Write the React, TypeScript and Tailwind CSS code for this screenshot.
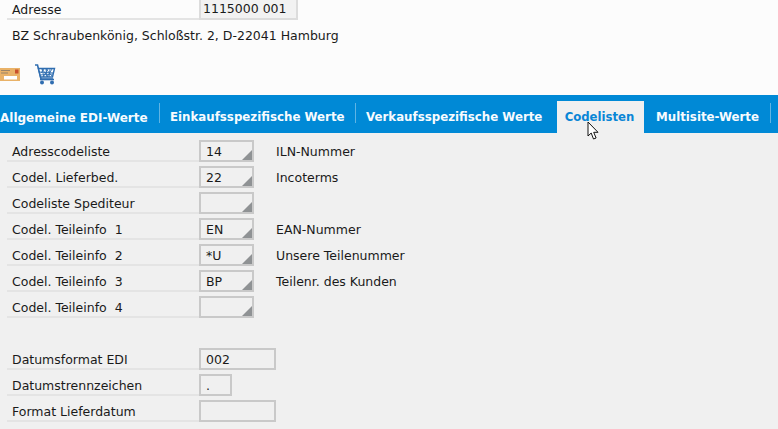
const font = "font-['DejaVu_Sans',sans-serif]";

type Row = { label: string; value?: string; note?: string; width: string; f4?: boolean };

const codeRows: Row[] = [
  { label: 'Adresscodeliste', value: '14', note: 'ILN-Nummer', width: 'w-[55px]', f4: true },
  { label: 'Codel. Lieferbed.', value: '22', note: 'Incoterms', width: 'w-[55px]', f4: true },
  { label: 'Codeliste Spediteur', width: 'w-[55px]', f4: true },
  { label: 'Codel. Teileinfo\u00a0\u00a01', value: 'EN', note: 'EAN-Nummer', width: 'w-[55px]', f4: true },
  { label: 'Codel. Teileinfo\u00a0\u00a02', value: '*U', note: 'Unsere Teilenummer', width: 'w-[55px]', f4: true },
  { label: 'Codel. Teileinfo\u00a0\u00a03', value: 'BP', note: 'Teilenr. des Kunden', width: 'w-[55px]', f4: true },
  { label: 'Codel. Teileinfo\u00a0\u00a04', width: 'w-[55px]', f4: true },
];

const dateRows: Row[] = [
  { label: 'Datumsformat EDI', value: '002', width: 'w-[77px]' },
  { label: 'Datumstrennzeichen', value: '.', width: 'w-[33px]' },
  { label: 'Format Lieferdatum', width: 'w-[77px]' },
];

const tabs = [
  { label: 'Allgemeine EDI-Werte', width: 'w-[160px]', pad: 'pl-0 text-[12px]', border: 'border-r border-[#5fb4e4]' },
  { label: 'Einkaufsspezifische Werte', width: 'w-[196px]', pad: 'pl-[10px]', border: 'border-r border-[#5fb4e4]' },
  { label: 'Verkaufsspezifische Werte', width: 'w-[201px]', pad: 'pl-[10px]', border: '' },
];

function FormRow({ label, value, note, width, f4 }: Row) {
  return (
    <div className="flex h-[26px] items-start">
      <div className="ml-[7px] flex h-[22px] w-[192px] items-center border-b-2 border-[#e4e4e4] pt-[5px] pl-[5px]">{label}</div>
      <div className={`relative flex h-[22px] ${width} items-center border-2 border-[#c9c9c9] pt-[3px] pl-[5px]`}>
        {value}
        {f4 && <span className="absolute right-0 bottom-0 h-0 w-0 border-b-[10px] border-l-[10px] border-b-[#8f9294] border-l-transparent" />}
      </div>
      {note && <div className="ml-[22px] flex h-[22px] items-center pt-[2px]">{note}</div>}
    </div>
  );
}

function Envelope() {
  return (
    <svg width="20" height="13" viewBox="0 0 20 13">
      <rect width="20" height="13" fill="#e9b268" />
      <rect x="15" y="1.5" width="3.5" height="4" fill="#c9502c" />
      <rect x="1" y="2" width="9" height="1" fill="#9a8468" />
      <rect x="1" y="4.5" width="7" height="1" fill="#9a8468" />
      <rect x="4" y="8" width="13" height="3.5" fill="#ffffff" />
    </svg>
  );
}

function Cart() {
  return (
    <svg width="22" height="21" viewBox="0 0 22 21" fill="none">
      <path d="M1 1h2.5l3.5 14h12" stroke="#2f6db0" strokeWidth="1.6" />
      <path d="M4.5 4.5h16l-2 8.5H6.5z" fill="#ffffff" stroke="#2f6db0" strokeWidth="1.4" />
      <path d="M8 5l2 8M12 5l1 8M16 5l-1 8M5 8l15 1M6 11l13-1M10 5l-3 4M14 5l-5 8M18 5l-5 8M8 5l6 8M12 5l6 7" stroke="#2f6db0" strokeWidth="0.9" />
      <path d="M6 15.5h14" stroke="#2f6db0" strokeWidth="1.6" />
      <circle cx="8" cy="18.5" r="2" fill="#2f6db0" />
      <circle cx="18" cy="18.5" r="2" fill="#2f6db0" />
    </svg>
  );
}

function Cursor() {
  return (
    <svg className="absolute top-[20px] left-[30px]" width="14" height="20" viewBox="0 0 14 20">
      <path d="M1 1v14l3.2-3 2.3 6 2.6-1-2.4-5.7H11z" fill="#ffffff" stroke="#111111" strokeWidth="1" />
    </svg>
  );
}

export default function App() {
  return (
    <div className={`flex h-[429px] w-[778px] flex-col overflow-hidden bg-[#f0f0f0] text-[12.5px] text-[#1a1a1a] ${font}`}>
      {/* Header */}
      <header className="h-[95px] shrink-0 bg-[#fcfcfc]">
        <div className="flex h-[20px] items-start">
          <div className="ml-[7px] flex h-[20px] w-[192px] items-center border-b-2 border-[#e4e4e4] pt-[2px] pl-[5px]">Adresse</div>
          <div className="flex h-[20px] w-[99px] items-center border-2 border-t-0 border-[#dcdcdc] bg-[#f2f2f2] pt-px pl-[2px]">1115000 001</div>
        </div>
        <div className="mt-[8px] pl-[12px] leading-[16px]">BZ Schraubenkönig, Schloßstr. 2, D-22041 Hamburg</div>
        <div className="mt-[20px] flex items-center gap-[14px]">
          <Envelope />
          <Cart />
        </div>
      </header>

      {/* Tab strip */}
      <nav className="flex h-[38px] shrink-0 items-end bg-[#0089d6] text-[11.8px] font-bold text-[#f7fbfe]">
        {tabs.map((tab) => (
          <div key={tab.label} className={`flex h-[32px] ${tab.width} items-start pt-[2px]`}>
            <div className={`flex h-[20px] w-full items-center pt-[9px] ${tab.border} ${tab.pad}`}>{tab.label}</div>
          </div>
        ))}
        <div className="relative flex h-[32px] w-[87px] items-center justify-center bg-[#f0f0f0] pt-px pr-[2px] text-[11.7px] text-[#0a86d6]">
          Codelisten
          <Cursor />
        </div>
        <div className="flex h-[32px] w-[127px] items-start pt-[2px]">
          <div className="flex h-[20px] w-full items-center border-r border-[#5fb4e4] pt-[9px] pl-[12px]">Multisite-Werte</div>
        </div>
      </nav>

      {/* Form */}
      <main className="pt-[7px]">
        {codeRows.map((row) => (
          <FormRow key={row.label} {...row} />
        ))}
        <div className="h-[26px]" />
        {dateRows.map((row) => (
          <FormRow key={row.label} {...row} />
        ))}
      </main>
    </div>
  );
}
